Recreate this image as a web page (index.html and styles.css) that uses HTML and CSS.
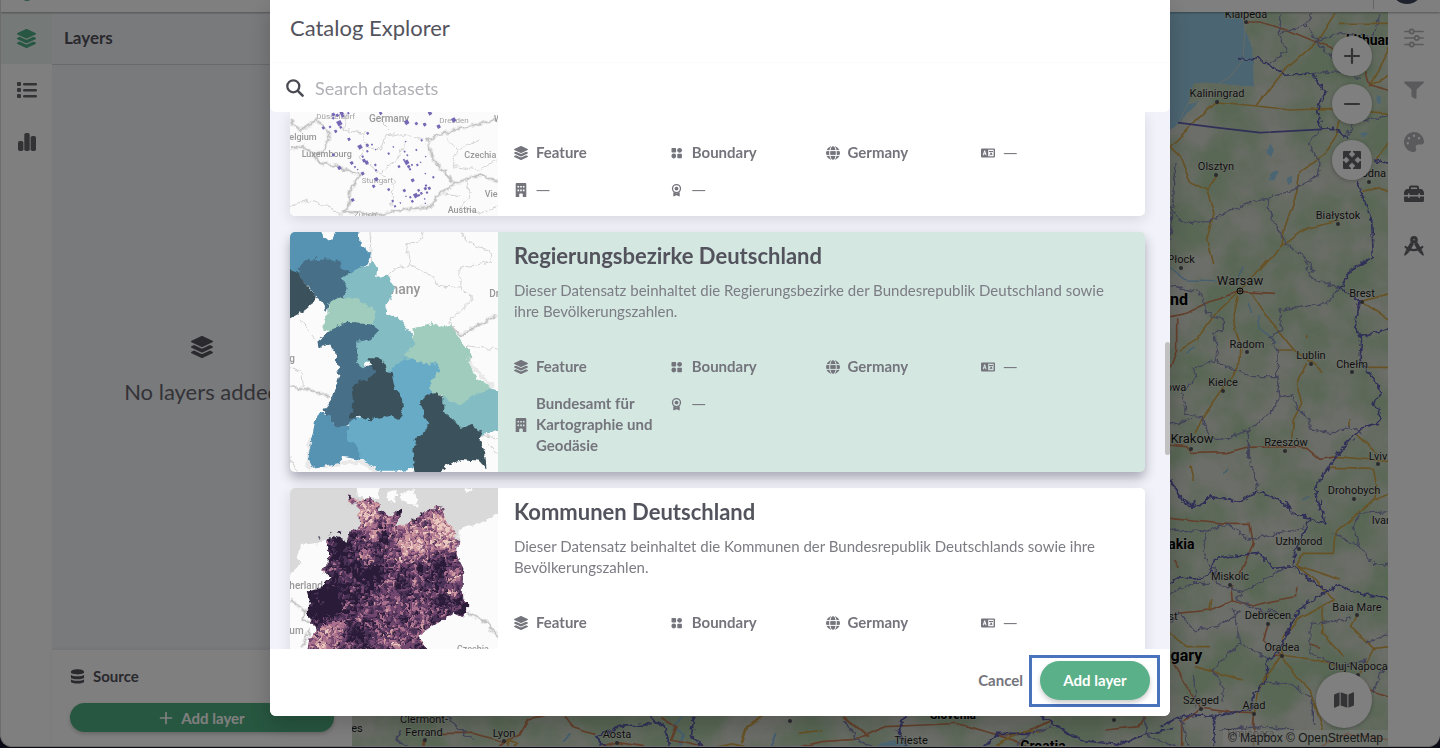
FILE: index.html
```html
<!DOCTYPE html>
<html lang="en">
<head>
<meta charset="utf-8">
<title>Catalog Explorer</title>
<meta name="viewport" content="width=device-width, initial-scale=1">
<link rel="stylesheet" href="styles.css">
</head>
<body>
<svg class="defs" width="0" height="0" aria-hidden="true">
  <defs>
    <symbol id="i-layers" viewBox="0 0 512 512"><path d="M12.41 148.02l232.94 105.67c6.8 3.09 14.49 3.09 21.29 0l232.94-105.67c16.55-7.51 16.55-32.52 0-40.03L266.65 2.31a25.607 25.607 0 0 0-21.29 0L12.41 107.98c-16.55 7.51-16.55 32.53 0 40.04zm487.18 88.28l-58.09-26.33-161.64 73.27c-7.56 3.43-15.59 5.17-23.86 5.17s-16.29-1.74-23.86-5.17L70.51 209.97l-58.1 26.33c-16.55 7.5-16.55 32.5 0 40l232.94 105.59c6.8 3.08 14.49 3.08 21.29 0L499.59 276.3c16.55-7.5 16.55-32.5 0-40zm0 127.8l-57.87-26.23-161.86 73.37c-7.56 3.43-15.59 5.17-23.86 5.17s-16.29-1.74-23.86-5.17L70.29 337.87 12.41 364.1c-16.55 7.5-16.55 32.5 0 40l232.94 105.59c6.8 3.08 14.49 3.08 21.29 0L499.59 404.1c16.55-7.5 16.55-32.5 0-40z"/></symbol>
    <symbol id="i-list" viewBox="0 0 20 20"><rect x="0" y="2" width="4" height="4" rx="1"/><rect x="0" y="8" width="4" height="4" rx="1"/><rect x="0" y="14" width="4" height="4" rx="1"/><rect x="6" y="3" width="14" height="2.4" rx="1.2"/><rect x="6" y="9" width="14" height="2.4" rx="1.2"/><rect x="6" y="15" width="14" height="2.4" rx="1.2"/></symbol>
    <symbol id="i-bars" viewBox="0 0 20 20"><rect x="1" y="9" width="5.4" height="10" rx="1.8"/><rect x="7.3" y="1" width="5.4" height="18" rx="1.8"/><rect x="13.6" y="4" width="5.4" height="15" rx="1.8"/></symbol>
    <symbol id="i-grid" viewBox="0 0 14 14"><rect x="1.500" y="2" width="4.6" height="4.6" rx=".8"/><circle cx="9.600" cy="4.3" r="2.4"/><circle cx="3.800" cy="10" r="2.4"/><rect x="7.300" y="7.7" width="4.6" height="4.6" rx=".8"/></symbol>
    <symbol id="i-globe" viewBox="0 0 14 14"><circle cx="7" cy="7" r="7"/><g class="cut"><path d="M0 4.6h14M0 9.4h14"/><ellipse cx="7" cy="7" rx="3.3" ry="7.4"/></g></symbol>
    <symbol id="i-lang" viewBox="0 0 14 14"><path fill-rule="evenodd" d="M1 2.5h12a1 1 0 0 1 1 1v7a1 1 0 0 1-1 1H1a1 1 0 0 1-1-1v-7a1 1 0 0 1 1-1zM7.2 3.7v6.6h5.4V3.7zM3.2 4.6 1.7 9.3h1l.3-1h1.3l.3 1h1L4.1 4.6zm.4 1.3.4 1.5h-.7z"/><path d="M8 5h4v1H8zM10.8 6.5l.7.5-2.6 2.6-.6-.7zM9 6.8l.7-.4 1.9 2.3-.7.6z"/></symbol>
    <symbol id="i-building" viewBox="0 0 14 14"><path fill-rule="evenodd" d="M2.7 0h8.6q1 0 1 1v13H8.8v-2.500a1 1 0 0 0-1-1H6.200a1 1 0 0 0-1 1V14H1.700V1q0-1 1-1zM3.500 3h1.600v1.600H3.500zm2.700 0h1.600v1.600H6.200zM8.900 3h1.600v1.600H8.900zM3.500 6.600h1.600v1.600H3.500zm2.700 0h1.600v1.600H6.200zm2.700 0h1.600v1.600H8.900z"/></symbol>
    <symbol id="i-award" viewBox="0 0 14 14"><circle cx="6.500" cy="5.600" r="4" fill="none" stroke="currentColor" stroke-width="1.300"/><circle cx="6.500" cy="5.600" r="1.900"/><path d="M3.300 9.200 6.500 10.400l3.200-1.200V13.500L6.500 12.300 3.300 13.500z"/></symbol>
    <symbol id="i-search" viewBox="0 0 18 18"><circle cx="7.300" cy="7.300" r="6" fill="none" stroke="currentColor" stroke-width="2.300"/><path d="M11.800 11.800l4.800 4.800" stroke="currentColor" stroke-width="2.500" stroke-linecap="round"/></symbol>
    <symbol id="i-db" viewBox="0 0 16 16"><path d="M1 3c0-3.600 14-3.600 14 0v.8c0 2.600-14 2.600-14 0zM1 6c2 2.200 12 2.200 14 0v3c0 2.600-14 2.600-14 0zM1 11c2 2.200 12 2.200 14 0v2.200c0 3-14 3-14 0z"/></symbol>
    <symbol id="i-plus" viewBox="0 0 18 18"><path d="M9 2v14M2 9h14" stroke="currentColor" stroke-width="2.200" stroke-linecap="round"/></symbol>
    <symbol id="i-minus" viewBox="0 0 18 18"><path d="M2 9h14" stroke="currentColor" stroke-width="2.200" stroke-linecap="round"/></symbol>
    <symbol id="i-expand" viewBox="0 0 18 18"><path d="M3 3l12 12M15 3L3 15" stroke="currentColor" stroke-width="3.800"/><path d="M1 0h6.500q1 .2.400 1L1 8q-.8.600-1-.4V1q0-1 1-1zM17 0h-6.500q-1 .2-.4 1L17 8q.8.600 1-.4V1q0-1-1-1zM1 18h6.500q1-.2.400-1L1 10q-.8-.6-1 .4V17q0 1 1 1zM17 18h-6.500q-1-.2-.4-1L17 10q.8-.6 1 .4V17q0 1-1 1z"/></symbol>
    <symbol id="i-map" viewBox="0 0 576 512"><path d="M0 117.66v346.32c0 11.32 11.43 19.06 21.94 14.86L160 416V32L20.12 87.95A32.006 32.006 0 0 0 0 117.66zM192 416l192 64V96L192 32v384zM554.06 33.16L416 96v384l139.88-55.95A31.996 31.996 0 0 0 576 394.34V48.02c0-11.32-11.43-19.06-21.94-14.86z"/></symbol>
    <symbol id="i-sliders" viewBox="0 0 20 20"><g fill="none" stroke="currentColor" stroke-width="1.700" stroke-linecap="round"><path d="M1 3.500h4.500M10 3.500h9M1 10h9.500M15 10h4M1 16.500h4.500M10 16.500h9"/><circle cx="7.700" cy="3.500" r="2.100"/><circle cx="12.700" cy="10" r="2.100"/><circle cx="7.700" cy="16.500" r="2.100"/></g></symbol>
    <symbol id="i-filter" viewBox="0 0 512 512"><path d="M487.976 40H24.028C2.71 40-8.047 60.866 7.058 75.971L192 245.941V412c0 7.831 3.821 15.17 10.237 19.662l80 45.98C298.02 488.69 320 477.493 320 457.98V245.941l184.947-169.97C520.021 60.896 509.338 40 487.976 40z"/></symbol>
    <symbol id="i-palette" viewBox="0 0 512 512"><path d="M204.3 5C104.9 24.4 24.8 104.3 5.2 203.4c-37 187 131.7 326.4 258.8 306.7 41.2-6.4 61.4-54.6 42.5-91.7-23.1-45.4 9.900-98.400 60.900-98.400h79.700c35.800 0 64.800-29.600 64.900-65.300C511.500 97.100 368.100-26.900 204.300 5zM96 320c-17.700 0-32-14.300-32-32s14.300-32 32-32 32 14.300 32 32-14.300 32-32 32zm32-128c-17.700 0-32-14.300-32-32s14.300-32 32-32 32 14.300 32 32-14.300 32-32 32zm128-64c-17.700 0-32-14.300-32-32s14.300-32 32-32 32 14.300 32 32-14.300 32-32 32zm128 64c-17.700 0-32-14.300-32-32s14.300-32 32-32 32 14.300 32 32-14.300 32-32 32z"/></symbol>
    <symbol id="i-toolbox" viewBox="0 0 20 20"><path fill-rule="evenodd" d="M5 5V3.500Q5 1.500 7 1.500h6q2 0 2 2V5h2q1 0 1.600.8l.8 1.200q.6.700.6 1.500V11h-4v-1q0-.8-.8-.8t-.8.8v1H5.600v-1q0-.8-.8-.8t-.8.8v1H0V8.500q0-.8.600-1.500l.8-1.200Q2 5 3 5zm2 0h6V3.500H7zM0 12.500h4v.8q0 .8.800.8t.8-.8v-.8h8.800v.8q0 .8.800.8t.8-.8v-.8h4v4q0 1.500-1.500 1.500h-17Q0 18 0 16.500z"/></symbol>
    <symbol id="i-compass" viewBox="0 0 20 20"><g fill="none" stroke="currentColor" stroke-linecap="round"><circle cx="10" cy="3.800" r="2.300" stroke-width="3"/><path d="M8.300 7 3.600 15M11.700 7l4.700 8" stroke-width="3.800" stroke-linecap="butt"/><path d="M1.600 11C6 15.200 13.500 15.200 18.400 11" stroke-width="2.200"/></g><path d="M2 14 5.300 15.900 1.300 19.600Q.1 20 .2 18.500zM18 14 14.700 15.900l4 3.700q1.200.4 1.100-1.100z"/></symbol>
    <filter id="jag" x="-5%" y="-5%" width="110%" height="110%"><feTurbulence type="fractalNoise" baseFrequency=".06" numOctaves="2" seed="4" result="n"/><feDisplacementMap in="SourceGraphic" in2="n" scale="20" xChannelSelector="R" yChannelSelector="G"/></filter>
    <filter id="wob" x="-5%" y="-5%" width="110%" height="110%"><feTurbulence type="fractalNoise" baseFrequency=".025" numOctaves="1" seed="9" result="n"/><feDisplacementMap in="SourceGraphic" in2="n" scale="14" xChannelSelector="R" yChannelSelector="G"/></filter>
    <filter id="land" x="0" y="0" width="100%" height="100%" color-interpolation-filters="sRGB"><feTurbulence type="fractalNoise" baseFrequency=".02" numOctaves="5" seed="12"/><feColorMatrix values="0 0 0 0 .7  0 0 0 0 .81  0 0 0 0 .67  2.6 0 0 0 -.8"/></filter>
    <clipPath id="de"><path d="M205 45 225 60 265 52 295 68 300 90 330 105 355 92 365 98 345 140 380 130 430 98 470 80 490 85 492 110 520 150 535 180 530 225 550 265 548 320 550 355 565 370 565 400 545 412 520 400 440 450 415 465 430 490 445 520H80L90 470 110 455 95 430 80 400 90 370 80 335 120 325 150 290 120 270 142 255 145 215 135 185 160 165 200 185 215 150 238 148 235 100 232 70 205 70z"/></clipPath>
  </defs>
</svg>

<div class="app" aria-hidden="true">
  <header class="topbar"><span class="logo"></span><span class="account"><span class="avatar"></span></span></header>
  <div class="workspace">
    <nav class="rail">
      <button class="rail-btn active" aria-label="Layers"><svg><use href="#i-layers"/></svg></button>
      <button class="rail-btn" aria-label="Legend"><svg><use href="#i-list"/></svg></button>
      <button class="rail-btn" aria-label="Charts"><svg><use href="#i-bars"/></svg></button>
    </nav>
    <aside class="panel">
      <h2 class="panel-title">Layers</h2>
      <div class="empty"><svg><use href="#i-layers"/></svg><p>No layers added</p></div>
      <div class="source">
        <div class="source-label"><svg><use href="#i-db"/></svg><span>Source</span></div>
        <button class="add-wide"><svg><use href="#i-plus"/></svg><span>Add layer</span></button>
      </div>
    </aside>
    <main class="map">
      <svg class="map-canvas" viewBox="352 12 1036 734" preserveAspectRatio="xMaxYMax slice">
        <rect class="land" x="352" y="12" width="1036" height="736"/>
        <rect x="352" y="12" width="1036" height="736" filter="url(#land)"/>
        <path class="water" filter="url(#wob)" d="M1160 5h84l2 25 3 15 2 40h-25l-12-1-20-1-4 12-1 8 10-2-12 12-5 10-22 16z"/>
        <path class="spit" d="M1245 25 1243 60 1230 77 1218 84M1190 100 1177 125"/>
        <g transform="translate(1160 0) scale(.3333)">
          <path class="water" filter="url(#wob)" d="M330 430l12 20-8 25-12-15zM335 520l22-8-15 30-20-2zM380 535l15-8 5 18-15 6zM650 285l15 5-5 25-10-10zM600 400l20-4 4 10-14 6z"/>
          <g class="road y" filter="url(#wob)"><path d="M470 126 525 40M470 126 370 215 290 318M172 306 290 318 390 330 510 326 690 340M172 306 120 350 30 440 60 470 90 545 140 570 162 640 140 720 158 792M140 570 170 525M540 360 530 405 495 460 420 515 410 580 375 680 365 740 300 810M365 740 440 685 535 664M540 70h150M610 578 660 560 690 575M690 140 660 200 630 255 690 225M690 420 650 480"/></g>
          <g class="road o" filter="url(#wob)"><path d="M258 66 300 66 380 90 470 126 560 160 610 195 630 255 700 275"/></g>
          <g class="admin" filter="url(#jag)"><path d="M360 50 355 100 380 150 330 192M360 100 440 75 455 40M440 75 490 150 560 200M457 220 540 215 600 235M485 388 445 430 480 490 475 525 400 570 320 595 220 625 150 665 70 668 30 620M320 595 335 650 380 735 440 775 460 815M30 720 45 490M560 410 580 370 690 345M460 125 540 100 640 110 660 40"/></g>
          <g class="nation" filter="url(#jag)"><path d="M234 172 275 180 292 170 325 195 380 225 457 222 495 280 470 330 485 388 520 385 565 418M590 540 635 660 640 770 575 812M640 480 690 490"/></g>
          <path class="nation" d="M54 368 170 383 300 398 485 388"/>
        </g>
        <g transform="translate(1160 260) scale(.3333)">
          <path class="water-line" filter="url(#wob)" d="M20 15 80 60 170 62M230 60 250 20M265 130 275 160M295 165 300 205 350 250M80 280 100 265M190 640 205 630M430 720 445 710"/>
          <g class="road o" filter="url(#wob)"><path d="M30 170 80 160 150 125 240 95 345 100M50 175 50 270 30 325M20 555 80 560 95 580 200 578 260 562 400 560 440 565 480 598 530 590"/></g>
          <g class="road y" filter="url(#wob)"><path d="M60 270 110 240 160 170 230 105 320 0M235 110 218 180 243 260 240 300 215 350 130 470 105 520M275 100 320 170 395 265 490 335M355 270h40M440 310 410 370 425 430 400 480 395 545M605 125 690 100M605 125 690 180M620 322h70M530 590 640 600 690 605M510 622 640 625 650 680 640 720M590 525 650 580M640 720 690 700M90 620 100 660M440 222v12M570 480v20"/></g>
          <g class="admin" filter="url(#jag)"><path d="M435 0 450 50 540 85 500 130 430 140 360 150 365 210 330 230 355 280 350 350 360 410 330 460 265 510 205 535 150 540 130 475 80 460 65 400 110 350 100 325 165 300 175 260 160 220 190 210 190 180 140 160 125 100 30 75M165 300 220 330 280 350 350 350M265 510 265 580 295 690M360 410 395 405 415 450 450 480 450 510 520 518 570 500 605 520M95 475 30 495M30 655 60 710"/></g>
          <g class="nation" filter="url(#jag)"><path d="M625 0 575 25 540 85 600 125 585 200 605 240 600 300 640 360 665 395 640 430 660 450 655 490 610 500 550 560 465 680 478 750M600 230 690 205M30 660 75 735 120 740 150 710 240 725 290 695 350 715 395 750"/></g>
        </g>
        <g transform="translate(1160 500) scale(.3333)">
          <g class="road o" filter="url(#wob)"><path d="M30 52 100 60 200 70 270 70 280 130 240 220M55 340 150 330 220 300 280 318 350 300 410 290 410 262M220 300 215 255M325 372 310 420 360 465M35 480 80 560 120 625 200 635 283 638M120 625 65 670 65 740M283 640 280 680M283 638 280 744M340 470 365 465M600 560 690 590M450 435 480 445M40 180 55 200M480 745 560 700 690 720"/></g>
          <g class="road y" filter="url(#wob)"><path d="M640 0 525 100 520 160 430 160 410 195 540 240M410 195 470 240 520 300 410 360 370 410 365 465 400 520 450 570 490 690M365 465 470 480 540 500 600 560M365 465 300 560 283 640M30 400 80 440 150 440M105 500 160 515 245 540M490 320 485 400 550 470M590 345 575 380 640 445 690 440M640 445 600 520M155 300 150 330M310 540 320 520"/></g>
          <g class="admin" filter="url(#jag)"><path d="M30 90 140 95 130 150 150 200 165 200 170 250 250 275 380 200M140 95 200 70 270 120 370 95 430 90M600 40 580 80 600 140 640 190 690 195M600 40 690 35M520 100 600 140M60 340 100 390 170 380 240 340 220 330 240 430 310 470 330 480M240 430 185 480 160 515 190 560 185 610M100 520 110 620M60 645 85 740M310 545 400 555 460 600 460 680M450 400 460 370 550 360 570 350M450 400 450 460 540 500 620 480M60 340 30 370M250 275 230 300 320 340 330 330 400 360M30 280 100 250 150 250M620 430 690 400M640 580 660 520 690 500M180 690 300 680 400 690"/></g>
          <g class="nation" filter="url(#jag)"><path d="M30 250 60 230 110 240 150 220 165 175 250 165 300 160 340 205 400 200 405 150 425 110 450 55 495 70 480 0M375 0 400 40 450 55M400 200 440 230 500 275 535 255 580 275 690 298M500 275 420 325 390 380 365 440 320 490 320 540 275 590 280 625 205 640 170 650 120 645 60 650 0 680M70 0 100 20 105 0M165 650 160 740"/></g>
        </g>
        <g transform="translate(340 700) scale(.5357 .3333)">
          <path class="water" filter="url(#wob)" d="M1010 130 1035 120 1070 142 1050 150h-50z"/>
          <path class="water-line" filter="url(#wob)" d="M635 140 640 105 625 75 640 50M805 145 815 100M415 125 430 100"/>
          <g class="road o" filter="url(#wob)"><path d="M190 100h60l55 25 30-20 15-45 30-10M158 120v25M305 125l-20 22M420 50l15 30 40 20M490 140l30-12 60 15M600 50l30 30-10 40 60 22M860 140 900 125 960 118 1020 80 1090 75 1150 70 1230 105 1280 100 1330 60M940 50l45 60M1230 105l60 40M1430 90l60-10 10-30"/></g>
          <g class="road y" filter="url(#wob)"><path d="M310 145l5-25 15 10-10 18M700 142l30-10 25 8M750 130l10-50 30-30M860 100l40-10M1220 140l40-40 50-5"/></g>
          <g class="admin" filter="url(#jag)"><path d="M110 95v30l20 20M200 50l30 50 20 20M940 60l25 60 30 25M1260 140l30-40 40-20M1500 50l10 60 50 30"/></g>
          <g class="nation" filter="url(#jag)"><path d="M490 140l-10-30 40-30 60-10M580 50l25 30 10 60M660 50l-5 60 20 30M1055 50l-15 40 20 50M1200 145l30-45 60 0M1310 50l70 70 70 15 50-30 60-20"/></g>
        </g>
        <g class="dots">
          <circle cx="1246" cy="22" r="2"/><circle cx="1217" cy="102" r="2"/><circle cx="1216" cy="175" r="2"/><circle cx="1369" cy="182" r="2"/><circle cx="1338" cy="224" r="2"/><circle cx="1181" cy="268" r="2"/><circle cx="1362" cy="302" r="2"/><circle cx="1247" cy="352" r="2"/><circle cx="1311" cy="364" r="2"/><circle cx="1352" cy="372" r="2"/><circle cx="1223" cy="391" r="2"/><circle cx="1191" cy="449" r="2"/><circle cx="1285" cy="451" r="2"/><circle cx="1378" cy="464" r="2"/><circle cx="1354" cy="499" r="2"/><circle cx="1299" cy="549" r="2"/><circle cx="1230" cy="585" r="2"/><circle cx="1357" cy="615" r="2"/><circle cx="1268" cy="624" r="2"/><circle cx="1282" cy="656" r="2"/><circle cx="1358" cy="675" r="2"/><circle cx="1201" cy="709" r="2"/><circle cx="1254" cy="714" r="2"/><circle cx="1114" cy="720" r="2"/><circle cx="790" cy="721" r="2"/><circle cx="425" cy="740" r="2"/><circle cx="504" cy="741" r="2"/><circle cx="617" cy="743" r="2"/><circle cx="1240" cy="291" r="3" fill="none" stroke="#000"/><circle cx="1240" cy="291" r="1.500"/>
        </g>
        <g class="labels">
          <text x="1246" y="18">Klaipėda</text><text x="1217" y="97">Kaliningrad</text><text x="1216" y="170">Olsztyn</text><text x="1372" y="177">rodna</text><text x="1338" y="219">Białystok</text><text x="1181" y="263">Płock</text><text class="m" x="1240" y="285">Warsaw</text><text x="1362" y="297">Brest</text><text x="1247" y="348">Radom</text><text x="1311" y="359">Lublin</text><text x="1352" y="368">Chełm</text><text x="1223" y="386">Kielce</text><text x="1176" y="391">owa</text><text class="m" x="1192" y="443">Krakow</text><text x="1286" y="446">Rzeszów</text><text x="1378" y="460">Lviv</text><text x="1354" y="494">Drohobych</text><text x="1382" y="524">Ivan</text><text x="1299" y="545">Uzhhorod</text><text x="1230" y="580">Miskolc</text><text x="1357" y="611">Baia Mare</text><text x="1268" y="619">Debrecen</text><text x="1170" y="620">est</text><text x="1282" y="651">Oradea</text><text x="1358" y="670">Cluj-Napoca</text><text x="1201" y="704">Szeged</text><text x="1254" y="709">Arad</text><text x="1250" y="737" opacity=".6">Timișoara</text>
          <text x="424" y="723">Clermont-</text><text x="424" y="736">Ferrand</text><text x="504" y="737">Lyon</text><text x="617" y="738">Aosta</text><text x="911" y="744">Trieste</text><text x="357" y="732">es</text><text x="697" y="754">Milan</text>
          <text class="c" x="1375" y="45">Lithuania</text><text class="c b" x="1179" y="305">nd</text><text class="c" x="1174" y="549">ovakia</text><text class="c b" x="1182" y="661">ngary</text><text class="c s" x="953" y="719">Slovenia</text><text class="c" x="1043" y="751">Croatia</text>
        </g>
      </svg>
      <div class="map-tools">
        <button class="round" aria-label="Zoom in"><svg><use href="#i-plus"/></svg></button>
        <button class="round" aria-label="Zoom out"><svg><use href="#i-minus"/></svg></button>
        <button class="round fit" aria-label="Fit view"><svg><use href="#i-expand"/></svg></button>
      </div>
      <button class="basemap" aria-label="Basemaps"><svg><use href="#i-map"/></svg></button>
      <div class="credits"><a href="#">© Mapbox</a> <a href="#">© OpenStreetMap</a></div>
    </main>
    <nav class="rail right">
      <button class="rail-btn off" aria-label="Settings"><svg><use href="#i-sliders"/></svg></button>
      <button class="rail-btn off" aria-label="Filter"><svg><use href="#i-filter"/></svg></button>
      <button class="rail-btn off" aria-label="Style"><svg><use href="#i-palette"/></svg></button>
      <button class="rail-btn" aria-label="Toolbox"><svg><use href="#i-toolbox"/></svg></button>
      <button class="rail-btn" aria-label="Draw"><svg><use href="#i-compass"/></svg></button>
    </nav>
  </div>
</div>

<div class="backdrop">
  <section class="modal" role="dialog" aria-labelledby="dlg-title">
    <div class="modal-top">
      <h1 id="dlg-title" class="modal-title">Catalog Explorer</h1>
      <label class="search"><svg><use href="#i-search"/></svg><input type="text" placeholder="Search datasets" aria-label="Search datasets"></label>
    </div>
    <div class="results">
      <article class="card cut-top">
        <svg class="thumb" viewBox="290 112 208 104" preserveAspectRatio="xMinYMax slice">
          <rect x="290" y="112" width="208" height="104" fill="#fbfbfb"/>
          <g transform="translate(280 100) scale(.3333)">
            <g class="t-halo" filter="url(#jag)"><path d="M30 60 60 90 110 60 150 100 135 150 100 165 120 190 160 195 240 225 210 270 205 320 190 335 300 345 360 330 450 320 480 280 525 250 460 180 440 120 520 90 580 75 650 60M30 145 70 140 100 165M525 250 600 225 655 245M190 335 180 350"/></g>
            <g class="t-line" filter="url(#jag)"><path d="M30 60 60 90 110 60 150 100 135 150 100 165 120 190 160 195 240 225 210 270 205 320 190 335 300 345 360 330 450 320 480 280 525 250 460 180 440 120 520 90 580 75 650 60M30 145 70 140 100 165M525 250 600 225 655 245"/></g>
            <g class="t-thin" filter="url(#jag)"><path d="M200 40 190 90 250 100 260 140 300 150 320 100 400 110 440 120M250 140 240 170 300 220 340 240 335 320M300 220 350 180 380 120M300 60 330 90M500 110 530 150 520 200 600 210 650 180M530 150 600 120M30 320 80 300 150 320 180 345M560 240 570 290 540 320 600 340 650 320M480 280 540 290"/></g>
            <g class="t-text"><text x="28" y="119">elgium</text><text class="s" x="109" y="56">Düsseldorf</text><text class="l" x="267" y="65">Germany</text><text class="s" x="478" y="70">Dresden</text><text x="65" y="171">Luxembourg</text><text x="553" y="174">Czechia</text><text class="s" x="245" y="248">Stuttgart</text><text x="642" y="65">W</text><text x="614" y="290">Vien</text><text x="503" y="338">Austria</text><text class="s" x="222" y="352">Zurich</text></g>
            <path id="pois" fill="#7668b4"/>
          </g>
        </svg>
        <div class="info">
          <ul class="meta">
            <li><svg><use href="#i-layers"/></svg>Feature</li><li><svg><use href="#i-grid"/></svg>Boundary</li><li><svg><use href="#i-globe"/></svg>Germany</li><li><svg><use href="#i-lang"/></svg><span class="none">—</span></li>
            <li><svg><use href="#i-building"/></svg><span class="none">—</span></li><li><svg><use href="#i-award"/></svg><span class="none">—</span></li>
          </ul>
        </div>
      </article>

      <article class="card selected">
        <svg class="thumb" viewBox="290 232 208 240" preserveAspectRatio="xMinYMin slice">
          <rect x="290" y="232" width="208" height="240" fill="#fbfbfb"/>
          <g transform="translate(280 225) scale(.3333)">
            <g class="t-thin" filter="url(#jag)"><path d="M270 20 275 120M430 20 420 50 380 60 390 120 350 130 320 155M390 120 460 155 470 180 540 190 580 220 540 260 510 280 515 300M545 20 560 50 630 80 635 110 540 130 540 190M545 360 655 375M60 285 90 320M95 330 110 345M30 425 65 440 70 485M600 630 655 640M620 650 655 690M30 700 50 740"/></g>
            <g class="t-halo" filter="url(#jag)"><path d="M30 485 90 495 150 515M540 330 580 310 650 270M570 390 565 410 640 490M90 640 85 725 180 715 240 710 290 735"/></g>
            <g class="t-line" filter="url(#jag)"><path d="M30 485 90 495 150 515M515 305 545 335 580 310 650 270"/></g>
            <g class="t-text"><text class="xl" x="318" y="207">many</text><text class="l" x="628" y="215">Dre</text><text class="l" x="28" y="412">g</text><text class="s" x="132" y="758">Zurich</text></g>
            <g filter="url(#jag)">
              <path fill="#5693b3" d="M10 0H125L130 45 160 40 178 0H232L240 60 270 85 265 115 240 140 215 160 10 160z"/>
              <path fill="#476f88" d="M50 130 80 105 140 100 185 110 180 130 225 145 200 160 210 190 190 225 145 240 140 258 125 230 108 215 90 190 60 160z"/>
              <path fill="#3b515c" d="M10 130 48 140 75 175 108 215 95 240 60 265 10 290z"/>
              <path fill="#83bcc2" d="M185 160 225 135 265 120 280 110 292 130 288 160 320 150 345 190 335 215 320 240 318 265 350 280 370 290 390 325 405 345 405 390 400 420 325 450 310 430 290 410 260 410 250 435 225 420 225 345 270 340 290 315 275 300 280 260 230 235 190 225 200 185z"/>
              <path fill="#9fccbd" d="M145 235 180 220 230 222 260 245 288 258 280 305 200 310 160 322 130 318 132 285 145 270z"/>
              <path fill="#476f88" d="M112 350 160 310 200 293 270 298 298 315 270 345 228 350 235 420 250 430 270 420 290 420 300 460 240 500 230 590 185 612 160 605 150 575 130 555 160 515 178 450 165 380 150 358 115 368z"/>
              <path fill="#5693b3" d="M120 560 150 570 160 605 205 605 230 650 260 690 240 705 190 695 175 715 100 728 85 700 95 640 105 590z"/>
              <path fill="#68abc6" d="M200 620 215 585 260 570 340 570 340 490 330 440 345 420 370 405 400 400 430 410 480 415 485 440 460 465 470 510 435 520 430 560 455 600 440 630 410 650 410 725 365 740 300 740 240 700 235 670 205 645z"/>
              <path fill="#3b515c" d="M215 490 235 470 270 460 285 440 262 400 290 400 312 410 320 440 335 445 345 490 365 520 370 555 355 585 330 572 270 583 235 575 205 582 220 540z"/>
              <path fill="#83bcc2" d="M485 505 540 535 570 500 620 487 670 500V615L605 630 545 620 480 570z"/>
              <path fill="#9fccbd" d="M370 390 405 360 397 310 450 300 455 287 480 305 515 300 540 345 572 385 565 410 590 460 635 490 570 515 540 545 495 515 450 500 452 465 478 440 470 415 430 418 400 402z"/>
              <path fill="#3b515c" d="M420 535 440 510 470 505 490 520 490 560 520 585 545 612 575 600 605 620 600 640 615 680 620 735 600 710 545 705 500 720 470 760H412L398 700 405 640 430 625 445 600z"/>
            </g>
          </g>
        </svg>
        <div class="info">
          <h3>Regierungsbezirke Deutschland</h3>
          <p>Dieser Datensatz beinhaltet die Regierungsbezirke der Bundesrepublik Deutschland sowie ihre Bevölkerungszahlen.</p>
          <ul class="meta">
            <li><svg><use href="#i-layers"/></svg>Feature</li><li><svg><use href="#i-grid"/></svg>Boundary</li><li><svg><use href="#i-globe"/></svg>Germany</li><li><svg><use href="#i-lang"/></svg><span class="none">—</span></li>
            <li><svg><use href="#i-building"/></svg>Bundesamt für Kartographie und Geodäsie</li><li><svg><use href="#i-award"/></svg><span class="none">—</span></li>
          </ul>
        </div>
      </article>

      <article class="card">
        <svg class="thumb" viewBox="290 488 208 240" preserveAspectRatio="xMinYMin slice">
          <rect x="290" y="488" width="208" height="240" fill="#fbfbfb"/>
          <g transform="translate(280 480) scale(.3333)">
            <path filter="url(#jag)" fill="#d9d9d9" d="M0-10H680V85L600 130 545 145 535 165 540 190 300 200 135 180 110 190 60 195 50 235 65 250 30 282H0z"/>
            <path filter="url(#jag)" fill="#fbfbfb" d="M222 0 235 50 300 58 295 45 300 0zM320 35 350 30 345 75 325 60zM355 45 400 25 410 75 370 65zM400 75 420 68 415 80zM550 25 575 28 560 40zM530 155 548 150 540 175z"/>
            <g class="t-halo" filter="url(#jag)"><path d="M30 360 80 395 65 420 90 425M90 450 65 500M565 400 620 425 655 475"/></g>
            <g class="t-line" filter="url(#jag)"><path d="M30 360 80 395 65 420 90 425M90 450 65 500M565 400 620 425 655 475"/></g>
            <g class="t-text"><text class="l" x="28" y="328">herland</text><text class="l" x="28" y="461">um</text><text x="531" y="515">Czechia</text></g>
            <g filter="url(#jag)"><g id="municipalities" clip-path="url(#de)"></g><path fill="#2b1f38" d="M350 92 362 86 366 96 352 102zM203 52 212 48 210 62zM115 174 124 171 122 176zM145 164 152 161 150 166zM172 158 184 154 182 160z"/></g>
          </g>
        </svg>
        <div class="info">
          <h3>Kommunen Deutschland</h3>
          <p>Dieser Datensatz beinhaltet die Kommunen der Bundesrepublik Deutschlands sowie ihre Bevölkerungszahlen.</p>
          <ul class="meta">
            <li><svg><use href="#i-layers"/></svg>Feature</li><li><svg><use href="#i-grid"/></svg>Boundary</li><li><svg><use href="#i-globe"/></svg>Germany</li><li><svg><use href="#i-lang"/></svg><span class="none">—</span></li>
          </ul>
        </div>
      </article>
      <span class="scroll-thumb"></span>
    </div>
    <footer class="actions">
      <button class="cancel">Cancel</button>
      <div class="highlight"><button class="confirm">Add layer</button></div>
    </footer>
  </section>
</div>
<script src="app.js"></script>
</body>
</html>
```
FILE: styles.css
```css
* { box-sizing: border-box; }
html, body { height: 100%; margin: 0; }
body {
  font-family: Lato, "Open Sans", sans-serif;
  color: #53535d;
  background: #16162c;
  overflow: hidden;
}
button { font: inherit; border: 0; padding: 0; background: none; color: inherit; cursor: pointer; }
h1, h2, h3, p, ul { margin: 0; padding: 0; }
svg { fill: currentColor; display: block; flex: none; }
.defs { position: absolute; }

.app {
  height: calc(100vh - 1px);
  display: flex;
  flex-direction: column;
  background: #fff;
  border-left: 1px solid #d8d8d8;
  border-bottom: 1px solid #d8d8d8;
  border-radius: 0 0 12px 12px;
  overflow: hidden;
}
.topbar {
  height: 12px;
  flex: none;
  display: flex;
  justify-content: space-between;
  box-shadow: 0 1px 2px #0005;
  position: relative;
  z-index: 1;
  background: #fff;
}
.logo { width: 12px; height: 12px; border-radius: 50%; background: #4fae86; margin: -11px 0 0 20px; }
.account { border-left: 1px solid #ccc; height: 9px; padding: 0 17px; display: flex; align-items: flex-end; }
.avatar { width: 32px; height: 32px; margin-bottom: 5px; border-radius: 50%; background: #3c4458; }
.workspace { flex: 1; display: flex; min-height: 0; }
.rail { width: 51px; flex: none; display: flex; flex-direction: column; }
.rail.right { width: 52px; }
.rail-btn { height: 52px; display: grid; place-items: center; color: #66666c; }
.rail-btn svg { width: 20px; height: 20px; }
.rail-btn.active { background: #ebf3ef; color: #4fae86; }
.rail-btn.active svg { width: 19px; height: 19px; }
.rail-btn.off { color: #b4b4b8; }

.panel { width: 300px; flex: none; display: flex; flex-direction: column; background: #f3f4f8; }
.panel-title { height: 53px; line-height: 52px; padding-left: 12px; font-size: 17px; font-weight: 700; border-bottom: 1px solid #d5d5d8; }
.empty { flex: 1; display: flex; flex-direction: column; align-items: center; justify-content: center; gap: 20px; color: #66666e; padding-top: 26px; }
.empty svg { width: 22px; height: 22px; color: #53535d; }
.empty p { font-size: 22px; line-height: 28px; }
.source { background: #fff; padding: 16px 18px 14px; display: flex; flex-direction: column; gap: 16px; box-shadow: 0 -1px 4px #0001; }
.source-label { display: flex; align-items: center; gap: 8px; font-size: 15px; line-height: 21px; font-weight: 700; }
.source-label svg { width: 15px; height: 15px; }
.add-wide { height: 29px; border-radius: 15px; background: #4fae80; color: #fff; font-size: 15px; font-weight: 700; display: flex; align-items: center; justify-content: center; gap: 8px; box-shadow: 0 2px 4px #0003; }
.add-wide svg { width: 14px; height: 14px; }

.map { flex: 1; min-width: 0; position: relative; overflow: hidden; }
.map-canvas { width: 100%; height: 100%; }
.land { fill: #d9dcd2; }
.water { fill: #98cbe4; }
.water-line { fill: none; stroke: #8abde0; stroke-width: 4; }
.spit { fill: none; stroke: #c8d4cc; }
.road { fill: none; stroke-width: 5; }
.road.y { stroke: #cfa54c; }
.road.o { stroke: #c98058; }
.admin { fill: none; stroke: #8688b4; stroke-width: 4; }
.nation { fill: none; stroke: #605fb0; stroke-width: 5; stroke-linejoin: round; }
.labels { font-family: Roboto, "Noto Sans", sans-serif; font-size: 11px; text-anchor: middle; fill: #1c1c1c; stroke: #dfe4d8; stroke-width: 1px; paint-order: stroke; }
.labels .m { font-size: 13px; }
.labels .c { font-size: 14px; font-weight: 700; fill: #000; }
.labels .b { font-size: 16px; }
.labels .s { font-size: 12px; }
.map-tools { position: absolute; top: 24px; right: 16px; display: flex; flex-direction: column; gap: 8px; }
.round { width: 40px; height: 40px; border-radius: 50%; background: #fff; display: grid; place-items: center; color: #66666c; box-shadow: 0 1px 4px #0004; }
.round svg { width: 18px; height: 18px; }
.fit { margin-top: 8px; }
.basemap { position: absolute; right: 16px; bottom: 18px; width: 56px; height: 56px; border-radius: 50%; background: #fff; display: grid; place-items: center; color: #66666c; box-shadow: 0 1px 4px #0004; }
.basemap svg { width: 20px; height: 18px; }
.credits { position: absolute; right: 0; bottom: 0; padding: 0 5px; font: 12px/16px "Liberation Sans", Arial, sans-serif; background: #ffffff66; }
.credits a { color: #333; text-decoration: none; }

.backdrop { position: fixed; inset: 0; z-index: 2; background: rgba(0, 0, 0, .5); display: flex; justify-content: center; align-items: flex-start; }
.modal { width: 900px; max-width: 100%; height: calc(100vh - 32px); display: flex; flex-direction: column; background: #f2f3fa; border-radius: 0 0 6px 6px; overflow: hidden; box-shadow: 0 8px 24px #0003; }
.modal-top { background: #fff; border-radius: 0 0 6px 6px; flex: none; }
.modal-title { padding: 14px 20px 20px; font-size: 22px; line-height: 28px; font-weight: 400; border-bottom: 1px solid #fafafa; }
.search { display: flex; align-items: center; gap: 11px; height: 49px; padding: 0 16px; color: #4a4a54; }
.search svg { width: 18px; height: 18px; }
.search input { flex: 1; border: 0; outline: 0; padding: 0; font: 18px/24px Lato, sans-serif; color: #4a4a54; background: none; }
.search input::placeholder { color: #b0b0b6; opacity: 1; }

.results { flex: 1; min-height: 0; position: relative; overflow: hidden; padding: 0 25px 0 20px; display: flex; flex-direction: column; gap: 16px; }
.card { --surface: #fff; flex: none; display: flex; background: var(--surface); border-radius: 5px; box-shadow: 0 4px 14px #00001a1f; min-height: 240px; }
.card.cut-top { min-height: 0; border-radius: 0 0 5px 5px; }
.card.selected { --surface: #d4e7e1; box-shadow: 0 6px 12px #00001a50; position: relative; }
.thumb { width: 208px; height: 240px; border-radius: 5px 0 0 5px; }
.cut-top .thumb { height: 104px; border-radius: 0 0 0 5px; }
.t-halo, .t-line, .t-thin { fill: none; stroke-linejoin: round; }
.t-halo { stroke: #e9e9e9; stroke-width: 12; }
.t-line { stroke: #c4c4c4; stroke-width: 5; }
.t-thin { stroke: #d2d2d2; stroke-width: 3; }
.t-text { font-family: Roboto, "Noto Sans", sans-serif; font-size: 27px; font-weight: 500; fill: #989898; }
.t-text .s { font-size: 24px; font-weight: 400; fill: #a4a4a4; }
.t-text .l { font-size: 30px; }
.t-text .xl { font-size: 42px; }
.info { flex: 1; padding: 10px 8px 16px 16px; }
.cut-top .info { padding-top: 30px; }
.info h3 { font-size: 22px; line-height: 28px; font-weight: 700; }
.info p { margin: 10px 0 34px; padding-right: 16px; font-size: 15px; line-height: 21px; color: #7c7c84; }
.meta { list-style: none; display: grid; grid-template-columns: repeat(4, 1fr); align-items: start; row-gap: 16px; font-size: 15px; line-height: 21px; font-weight: 700; color: #74747c; }
.meta li { display: flex; align-items: center; gap: 8px; padding-right: 8px; }
.meta svg { width: 14px; height: 14px; }
.cut { fill: none; stroke: var(--surface); stroke-width: 1px; }
.none { font-family: "Open Sans", sans-serif; font-size: 14px; font-weight: 400; }
.scroll-thumb { position: absolute; right: 0; top: 230px; width: 5px; height: 113px; border-radius: 3px; background: #c1c1c1; }

.actions { flex: none; height: 67px; background: #fff; padding: 6px 10px; display: flex; justify-content: flex-end; align-items: flex-start; gap: 6px; }
.cancel { height: 50px; font-size: 15px; font-weight: 700; color: #74747c; }
.highlight { border: 3px solid #4a73bd; padding: 3px 7px 4px 8px; }
.confirm { width: 110px; height: 39px; padding-bottom: 1px; border-radius: 20px; background: #5ab088; color: #fff; font-size: 15px; font-weight: 700; box-shadow: 0 3px 5px #0003; display: block; }
```
FILE: app.js
```js
// Small deterministic generator so the maps look the same on each load.
let state = 7;
function rnd() {
  state = (state * 1103515245 + 12345) % 2147483648;
  return state / 2147483648;
}

// Municipality cells: dark in the west, light in the north-east and south-west.
const palette = ['#2b1f38', '#4a3054', '#71466f', '#a8708d', '#cf9a9f', '#e9c8bf'];
const spots = [
  [265, 100, 75, 3], [430, 150, 100, 2.1], [500, 120, 60, 1.6], [520, 190, 50, 1.4],
  [130, 480, 60, 3.4], [175, 430, 25, 2.6], [300, 350, 45, 1.4], [395, 400, 60, 1.3],
  [300, 480, 60, 1.3], [400, 490, 50, 1.4], [125, 268, 20, 2], [165, 265, 20, 1.6],
  [510, 320, 60, 1.1], [250, 230, 30, 1.1], [380, 210, 60, 1.2], [230, 470, 35, -1.5],
  [130, 380, 80, -2], [180, 210, 50, -1.4], [300, 170, 25, -2], [480, 265, 40, -1.4], [280, 280, 40, -1.2]
];

// Irregular patches that break up the smooth regional trend.
for (let i = 0; i < 160; i++) {
  spots.push([80 + rnd() * 480, 50 + rnd() * 470, 7 + rnd() * 10, rnd() * 4 - 2]);
}

const paths = palette.map(() => '');
for (let y = 36; y < 520; y += 6) {
  for (let x = 72; x < 576; x += 6) {
    let v = 0.6;
    for (const [cx, cy, r, w] of spots) {
      v += w * Math.exp(-((x - cx) ** 2 + (y - cy) ** 2) / (r * r));
    }
    v += (rnd() + rnd() - 1) * 2.4;
    const i = Math.max(0, Math.min(5, Math.round(v)));
    paths[i] += `M${x} ${y}h7v7h-7z`;
  }
}
document.getElementById('municipalities').innerHTML =
  paths.map((d, i) => `<path fill="${palette[i]}" d="${d}"/>`).join('');

// Points of interest: x, y, size.
const pois = [
  [160, 44, 9], [185, 40, 10], [205, 40, 6], [160, 55, 6], [178, 70, 14], [182, 82, 7], [130, 84, 8], [150, 81, 6], [167, 94, 8], [188, 48, 8], [172, 46, 8],
  [302, 40, 8], [380, 67, 12], [409, 71, 8], [434, 74, 9], [450, 40, 10], [476, 80, 10], [521, 60, 12],
  [263, 100, 7], [207, 118, 8], [240, 141, 12], [262, 136, 8], [276, 134, 5], [262, 154, 6], [287, 149, 4], [326, 161, 6], [340, 141, 4], [377, 125, 4], [425, 121, 6], [409, 150, 5], [374, 155, 5], [382, 166, 5],
  [215, 189, 9], [225, 201, 5], [248, 170, 6], [252, 182, 9], [260, 188, 10], [178, 204, 10], [233, 209, 4], [286, 195, 6], [288, 211, 6], [248, 221, 9], [160, 165, 7],
  [380, 187, 12], [386, 200, 8], [372, 180, 5], [396, 195, 5], [390, 208, 6], [412, 195, 6], [357, 200, 7], [422, 187, 4], [437, 170, 4], [436, 221, 4], [460, 232, 6],
  [398, 241, 9], [289, 238, 10], [281, 259, 8], [326, 269, 7], [373, 272, 8], [416, 271, 7], [436, 266, 8], [448, 265, 8], [438, 257, 6], [424, 280, 7], [441, 278, 6],
  [407, 287, 12], [417, 286, 6], [391, 292, 6], [397, 304, 7], [378, 289, 4], [434, 297, 4], [436, 310, 4], [338, 303, 6], [345, 319, 6], [361, 309, 4], [218, 300, 9]
];
document.getElementById('pois').setAttribute('d', pois.map(([x, y, s]) => {
  const h = s * 0.7;
  return `M${x - h} ${y - h * 0.4}L${x + h * 0.3} ${y - h}L${x + h} ${y + h * 0.2}L${x - h * 0.2} ${y + h}z`;
}).join(''));
```
